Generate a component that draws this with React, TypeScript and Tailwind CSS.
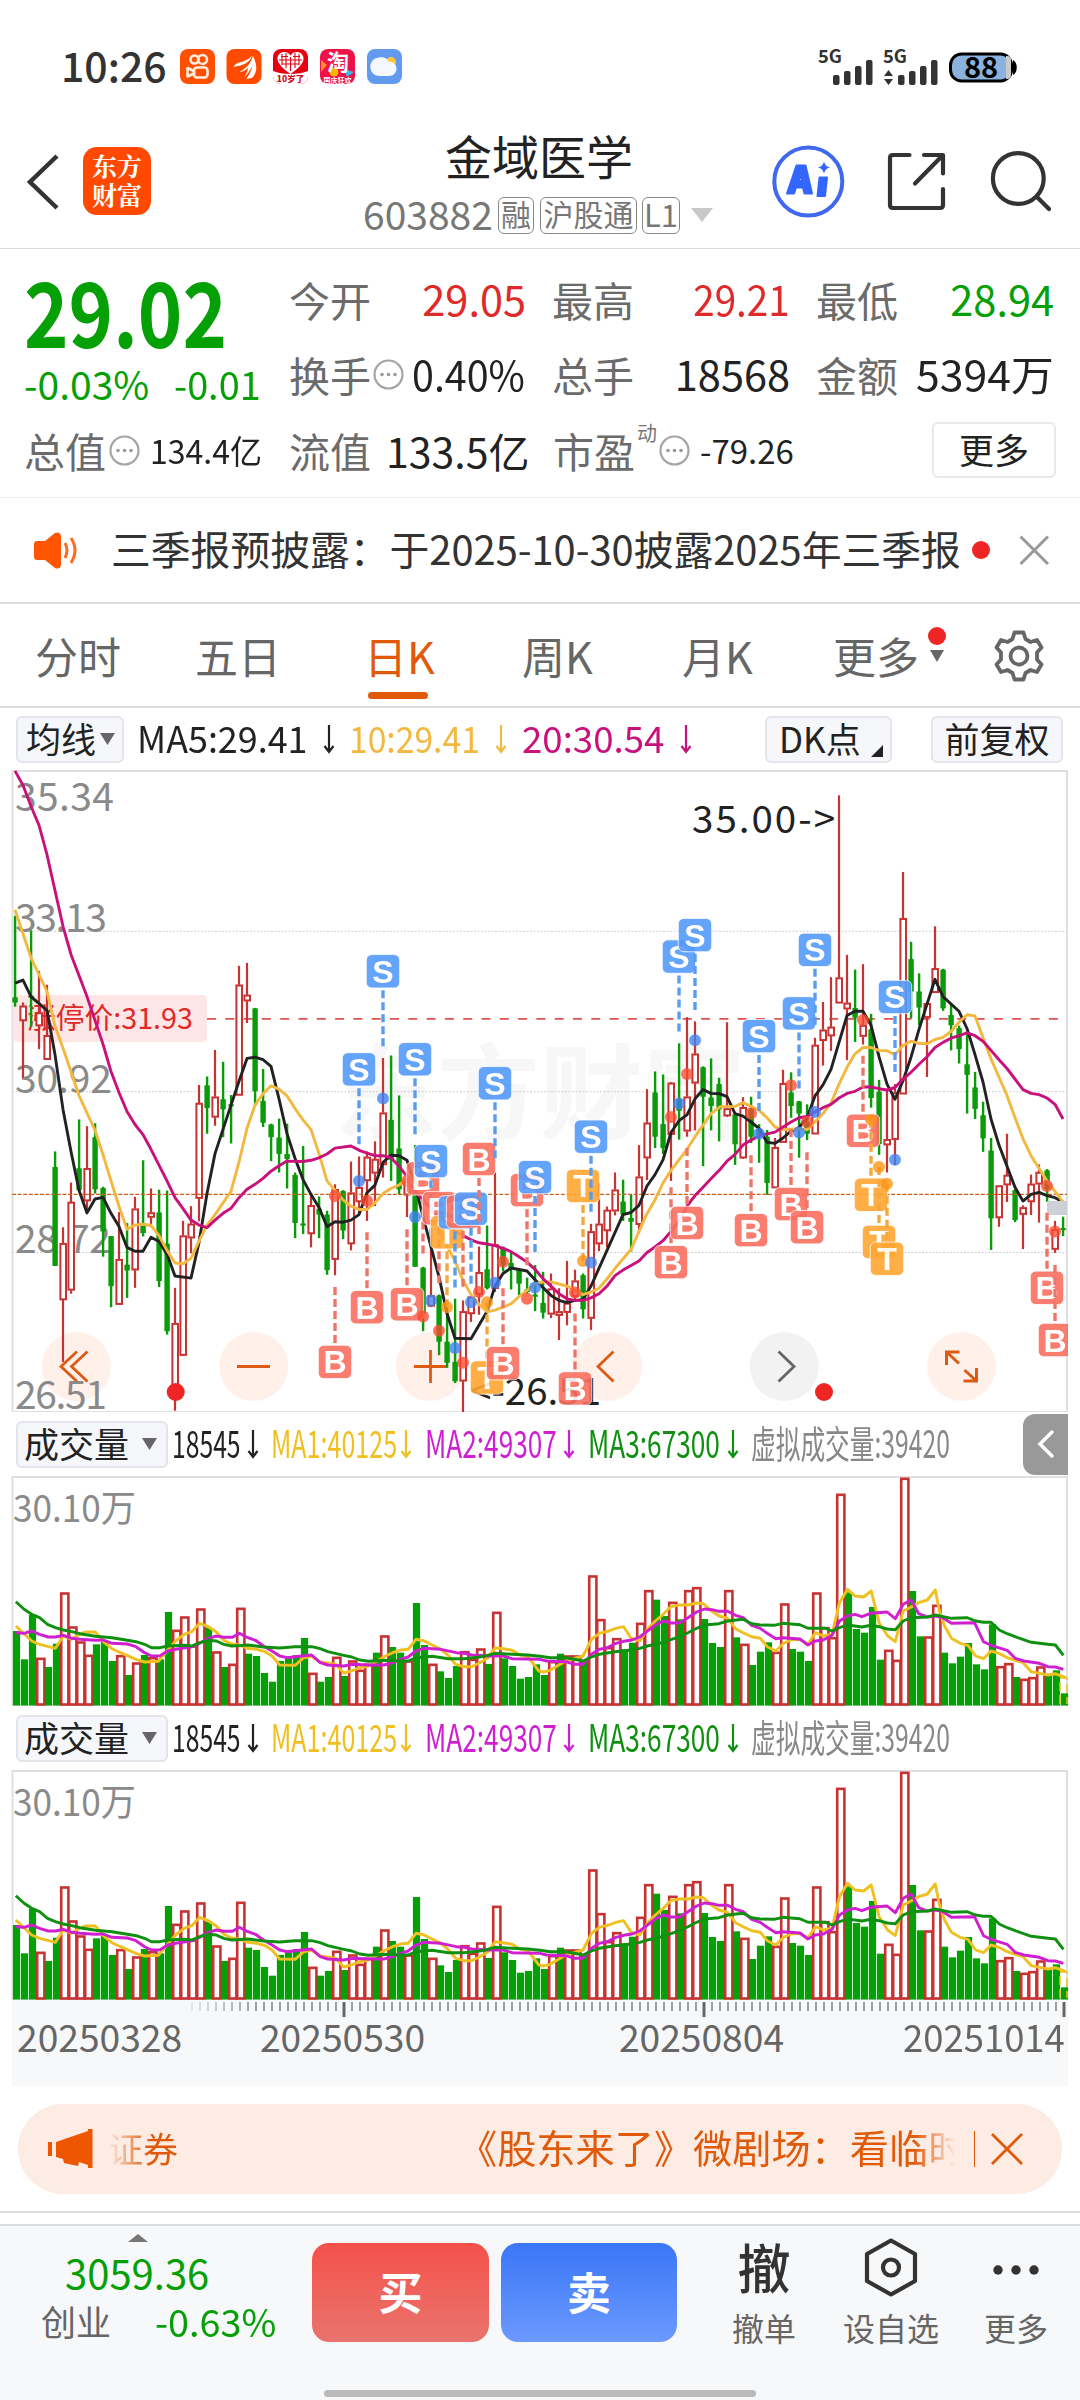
import React from "react";

type Pt = [number, number];

const RED = "#c73333";
const GREEN = "#0a9b0a";
const FONT = "'Noto Sans CJK SC', 'Noto Sans', sans-serif";

/* ---------- price chart data: colour, high, body top, body bottom, low ---------- */
const CANDLES = `G370,564,576,586 R576,584,620,755 G405,560,562,634 R501,600,632,687 R534,654,712,713 G930,967,1202,1202
R1110,1148,1283,1430 R1004,1050,1260,1268 G854,970,1022,1024 R870,970,1048,1076 G863,896,1020,1030 G1014,1017,1120,1180
G1131,1131,1250,1300 R1074,1186,1294,1294 G1100,1199,1213,1278 R1038,1066,1212,1254 G951,1100,1124,1132 R1018,1075,1087,1102
G1021,1075,1238,1252 G1023,1149,1357,1365 R1254,1338,1500,1546 R1095,1130,1415,1415 R1060,1102,1136,1172 R772,815,1042,1096
G752,773,827,888 R689,800,849,869 G717,806,830,896 G796,818,823,911 R489,534,797,797 R482,558,573,625 G589,590,787,822
G734,810,862,872 G864,866,896,953 G852,897,936,980 G864,936,948,1018 G980,986,1100,1136 G917,1101,1106,1126 R1032,1058,1126,1158
G1037,1066,1080,1136 G1071,1080,1212,1223 R1008,1020,1187,1224 G1022,1024,1118,1138 R954,1028,1150,1165 R942,1015,1050,1080
R930,943,1000,1095 R906,948,982,1060 R708,838,962,992 G702,855,950,1000 G797,923,1020,1032 R1000,1000,1034,1086
G915,1000,1204,1204 G1204,1206,1315,1357 R1130,1272,1298,1300 G1270,1272,1382,1414 G1300,1382,1432,1444 G1280,1430,1476,1480
R1284,1310,1476,1550 R1274,1275,1316,1335 R1156,1217,1270,1318 G1106,1210,1255,1258 R980,1151,1256,1264 G1156,1158,1200,1215
G1168,1195,1207,1258 G1209,1212,1244,1272 G1230,1258,1264,1268 G1200,1270,1275,1309 G1216,1290,1313,1327 R1220,1256,1317,1326
R1255,1310,1320,1378 R1190,1290,1313,1343 R1211,1237,1275,1282 G1220,1224,1305,1327 R1102,1120,1327,1354 R1005,1102,1150,1167
R1061,1069,1119,1158 R980,1021,1072,1082 G997,1049,1080,1095 G1033,1088,1097,1168 R915,990,1104,1125 R782,862,946,998
G740,790,895,922 G747,865,922,936 R765,767,890,1000 G673,806,833,902 R611,800,882,895 R621,698,768,880 G728,730,800,965
G709,802,822,880 G755,770,830,906 R623,828,846,848 G840,842,913,962 R801,825,946,948 G800,830,895,910 G865,878,890,957
G879,895,1005,1033 R898,920,1017,1017 R736,768,909,909 G742,790,822,850 G810,811,840,945 G818,860,888,903 R660,677,889,889
R575,641,667,726 R516,634,656,691 R84,517,578,578 R463,577,592,713 G498,589,612,670 R485,630,657,676 G603,640,803,826
G760,788,912,938 R783,901,915,980 R770,790,902,962 R266,376,794,794 G432,473,550,614 G507,550,588,630 R578,578,612,753
R395,495,553,553 G496,498,590,596 G580,606,630,690 G631,637,687,721 G650,723,748,840 G741,778,829,853 G812,844,899,931
G898,928,1089,1164 R1011,1011,1088,1109 R888,986,1010,1050 G1020,1022,1093,1098 R1058,1063,1080,1162 R985,1007,1050,1081
R961,979,1008,1099 G972,975,1020,1050 R1095,1115,1163,1171 G1085,1112,1117,1131`
  .split(/\s+/)
  .map((s) => ({ up: s[0] === "R", v: s.slice(1).split(",").map(Number) }));

const pts = (s: string): Pt[] => s.trim().split(/\s+/).map((p) => p.split(",").map(Number) as Pt);

const MA5 = pts(`45,530 69,523 93,562 141,595 165,700 189,830 213,930 237,1022 261,1076 285,1043 309,1039 333,1077 357,1108 381,1158 405,1167 429,1167 453,1134 477,1144 501,1174 525,1226 573,1231 597,1146 621,1030 645,935 693,820 717,763 741,709 765,706 789,712 813,728 837,805 861,888 885,946 909,997 933,1032 957,1063 981,1109 1005,1097 1029,1098 1053,1093 1077,1080 1101,1028 1125,1010 1149,956 1173,939 1197,940 1221,951 1245,1010 1269,1085 1317,1228 1341,1315 1365,1374 1413,1375 1461,1310 1485,1250 1509,1220 1533,1207 1581,1214 1605,1235 1653,1272 1677,1284 1701,1289 1725,1284 1749,1282 1773,1250 1821,1165 1869,1080 1893,1075 1917,1058 1941,1012 1965,985 1989,950 2013,885 2037,857 2061,843 2085,805 2109,783 2133,792 2160,793 2181,800 2205,840 2229,846 2253,860 2277,875 2301,908 2325,911 2349,898 2373,882 2397,873 2421,850 2445,798 2469,772 2493,735 2541,607 2565,597 2589,597 2613,630 2637,705 2661,770 2685,806 2709,762 2733,706 2757,640 2781,580 2805,521 2829,562 2877,597 2901,638 2925,700 2949,765 2973,853 2997,915 3021,965 3045,1015 3069,1048 3093,1032 3117,1027 3141,1035 3165,1040 3189,1050`);
const MA10 = pts(`45,356 93,470 141,550 165,632 189,685 213,740 237,797 285,880 309,938 333,1000 357,1060 381,1115 405,1105 429,1103 453,1106 477,1130 501,1165 525,1195 549,1197 573,1184 597,1143 621,1105 645,1080 693,1025 717,955 741,875 765,820 789,793 813,774 837,782 861,798 885,828 909,855 933,878 957,935 981,1000 1029,1045 1053,1060 1077,1068 1101,1068 1125,1052 1149,1030 1173,1018 1197,1010 1221,993 1245,1010 1269,1040 1317,1105 1341,1155 1365,1190 1389,1236 1413,1270 1437,1293 1461,1311 1485,1307 1509,1300 1533,1292 1557,1275 1581,1260 1605,1245 1629,1240 1653,1240 1677,1245 1701,1250 1725,1260 1749,1270 1773,1264 1797,1255 1821,1233 1845,1208 1869,1185 1893,1163 1917,1120 1941,1078 1965,1045 1989,1005 2013,975 2061,925 2085,895 2109,868 2133,840 2160,824 2205,823 2229,814 2253,823 2277,832 2301,850 2325,872 2349,878 2397,876 2421,878 2445,860 2469,840 2493,815 2517,770 2541,730 2565,698 2589,683 2613,683 2637,690 2661,691 2685,700 2709,678 2733,668 2757,673 2781,674 2805,664 2829,659 2853,645 2877,623 2901,605 2925,608 2949,660 2973,710 3021,797 3045,850 3069,900 3093,940 3117,970 3141,1000 3165,1025 3189,1050`);
const MA20 = pts(`45,26 69,60 93,110 117,155 141,225 165,310 189,395 213,462 261,562 309,675 333,740 357,790 381,835 405,866 429,890 453,925 501,1000 525,1040 549,1066 573,1093 597,1105 621,1111 645,1093 669,1077 693,1065 717,1040 741,1020 765,1008 789,994 813,977 837,964 861,953 909,954 933,951 957,945 981,936 1005,922 1053,917 1080,928 1101,934 1125,940 1149,940 1173,945 1197,965 1221,990 1245,1025 1269,1045 1293,1065 1317,1090 1365,1120 1389,1130 1413,1140 1437,1147 1461,1150 1485,1154 1509,1160 1533,1168 1557,1180 1581,1193 1605,1210 1629,1232 1653,1250 1677,1268 1701,1280 1725,1284 1749,1284 1773,1278 1797,1268 1821,1250 1845,1225 1869,1212 1917,1190 1941,1170 1965,1157 1989,1142 2013,1120 2037,1095 2061,1060 2085,1035 2109,1015 2133,995 2160,973 2181,953 2205,937 2229,915 2253,903 2277,893 2301,888 2325,884 2349,872 2373,860 2397,850 2421,847 2445,836 2469,826 2493,818 2517,803 2541,792 2565,787 2589,777 2613,777 2637,781 2661,784 2685,778 2709,758 2733,742 2757,723 2781,705 2805,683 2829,671 2853,661 2877,655 2901,648 2925,655 2949,668 2973,690 2997,712 3021,733 3069,783 3093,792 3117,795 3141,803 3165,818 3189,853`);

/* trade marks: kind, x, label centre, dot centre */
const MARKS = `B1005,1430,1036 S1077,735,1000 B1101,1300,1047 S1149,502,804 B1221,1293,1000 S1245,711,1086 B1269,994,1322 S1293,953,1284 B1317,1065,1356 T1341,1122,1300 S1365,1075,1397 B1389,1073,1432 S1413,1066,1288 B1437,948,1264 T1461,1467,1288 S1485,768,1242 B1509,1433,1192 B1581,1022,1280 S1605,991,1253 B1725,1493,1265 T1749,1012,1190 S1773,895,1194 B2013,1193,848 S2037,467,816 B2061,1100,746 S2085,416,666 B2253,1117,840 S2277,656,888 B2373,1055,773 S2397,602,885 B2421,1110,860 S2445,451,836 B2589,881,618 T2613,1033,855 T2637,1145,967 T2661,1185,1007 S2685,563,950 B3141,1254,1012 B3165,1378,1120`
  .split(" ")
  .map((s) => ({ k: s[0] as "S" | "B" | "T", v: s.slice(1).split(",").map(Number) }));

const MARK_COLOR = { S: "#559bfb", B: "#fa7060", T: "#ffa733" };
const STEM_COLOR = { S: "#5a9cf0", B: "#ef7568", T: "#f5a83c" };
const DOT_COLOR = { S: "#3d82f5", B: "#fb4a30", T: "#ff9412" };

const UNIT = 2.3758;
const py = (v: number) => v / UNIT - 10;
const line = (p: Pt[]) => p.map(([x, v]) => `${(x / 3).toFixed(1)},${py(v).toFixed(1)}`).join(" ");

function PriceChart() {
  return (
    <svg className="block h-[642px] w-[1080px]" viewBox="0 0 1080 642" style={{ fontFamily: FONT }}>
      <rect x="12.5" y="1" width="1054.5" height="641" fill="#fff" stroke="#e0e0e2" strokeWidth="2" />
      <text x="334" y="361" fontSize="103" fontWeight="700" fill="#f7f7f7">东方财富</text>
      {[407, 788, 1170].map((v) => (
        <line key={v} x1="12" x2="1067" y1={py(v)} y2={py(v)} stroke="#cfcfcf" strokeWidth="1" strokeDasharray="2 1.5" />
      ))}
      {[76.3, 253.7, 430.3, 607.5, 784.3, 961.5].map((x, i) => (
        <circle key={x} cx={x} cy="596.5" r="34.5" fill={i === 4 ? "#f2f2f2" : "#fff1ea"} />
      ))}
      <g fill="none" stroke="#dc5a14" strokeWidth="2.8">
        <path d="M77 581.500 61 596.500 77 611.500M87.500 581.500 71.500 596.500 87.500 611.500" />
        <path d="M237 596.500h33" />
        <path d="M414 596.500h33M430.500 580v33" />
        <path d="M613.500 581.500 598 596.500 613.500 611.500" />
        <path d="M778.500 581.500 794 596.500 778.500 611.500" stroke="#666" />
        <path strokeWidth="3" d="M946.500 595v-13h13M947 582.500l12 11M963.500 611h13v-13M964.500 600l12 11" />
      </g>
      <rect x="13" y="225" width="194" height="47" rx="5" fill="#ffe6e6" />
      <text x="27" y="259" fontSize="29" fill="#e02a2a" textLength="166" lengthAdjust="spacingAndGlyphs">涨停价:31.93</text>
      <line x1="207" x2="1067" y1={py(615)} y2={py(615)} stroke="#e05252" strokeWidth="1.6" strokeDasharray="9 9.3" />
      <g fontSize="39" fill="#8a8a8a">
        <text x="15" y="41" textLength="99">35.34</text>
        <text x="15" y="162" textLength="92">33.13</text>
        <text x="15" y="323" textLength="97">30.92</text>
        <text x="15" y="483" textLength="96">28.72</text>
        <text x="15" y="639" textLength="92">26.51</text>
      </g>
      {CANDLES.map(({ up, v }, i) => {
        const x = 15 + i * 8;
        const [h, t, b, l] = v.map(py);
        return up ? (
          <g key={i} stroke={RED} strokeWidth="2.2">
            <line x1={x} x2={x} y1={h} y2={t} />
            <line x1={x} x2={x} y1={b} y2={l} />
            <rect x={x - 2.6} y={t + 0.7} width="5.6" height={Math.max(b - t - 1.4, 2)} fill="#fff" strokeWidth="2" />
          </g>
        ) : (
          <g key={i} fill={GREEN}>
            <rect x={x - 1.1} y={h} width="2.4" height={l - h} />
            <rect x={x - 2.6} y={t} width="5.4" height={Math.max(b - t, 2)} />
          </g>
        );
      })}
      <line x1="12" x2="1067" y1={py(1032)} y2={py(1032)} stroke="#c9601c" strokeWidth="1.4" strokeDasharray="4 1.6" />
      <g fill="none" strokeWidth="2.9" strokeLinejoin="round">
        <polyline points={line(MA5)} stroke="#222" />
        <polyline points={line(MA10)} stroke="#f3b83f" />
        <polyline points={line(MA20)} stroke="#c9117c" />
      </g>
      <rect x="1047" y="431" width="20" height="14" fill="#cdd1d7" />
      <g fontSize="38.5" fill="#222">
        <text x="692" y="63" textLength="143">35.00-&gt;</text>
        <text x="470" y="635" textLength="131">&lt;-26.51</text>
      </g>
      {MARKS.map(({ k, v }, i) => {
        const x = v[0] / 3;
        const y = py(v[1]);
        const dot = py(v[2]);
        const down = v[2] > v[1];
        const y1 = down ? y + 19 : y - 19;
        const y2 = down ? y + 75 : y - 75;
        return (
          <g key={i}>
            <line x1={x} x2={x} y1={down ? y1 : y2} y2={down ? y2 : y1} stroke={STEM_COLOR[k]} strokeWidth="3.4" strokeDasharray="8 4" />
            <circle cx={x} cy={dot} r="6" fill={DOT_COLOR[k]} opacity="0.78" />
            <g opacity="0.9">
              <rect x={x - 16.7} y={y - 16.7} width="33.4" height="33.4" rx="5.5" fill={MARK_COLOR[k]} stroke="#fff" strokeOpacity="0.8" strokeWidth="1" />
              <text x={x} y={y + 11.5} fontSize="32" fontWeight="700" fill="#fff" textAnchor="middle" style={{ fontFamily: "'Liberation Sans', sans-serif" }}>{k}</text>
            </g>
          </g>
        );
      })}
      <rect x="1068" y="400" width="12" height="242" fill="#fff" />
      <circle cx="175.700" cy="622" r="9" fill="#ef2424" />
      <circle cx="824" cy="622" r="9" fill="#ef2424" />
    </svg>
  );
}

/* ---------- volume data ---------- */
const VOLUMES = `G690 G775 G642 R772 G798 G728 R576 R678 R723 R763 G730 G722 G780 R764 G822 R786 G762 R770 G775 G633 R688 R648 R735 R624 G680 R753 G798 R790 R622 G758 G765 G816 G842 G780 G772 G762 G711 R817 G842 G828 R769 G825 R780 R808 R790 G755 R705 G738 G755 R780 G606 G732 R790 G811 G831 G795 R752 R775 R744 G789 R634 G772 G795 G833 G828 G790 G822 R782 G758 R765 R765 G780 R525 R656 R740 R713 G745 G725 R667 R569 G596 G645 R604 G655 R569 R560 G654 G726 G738 R569 G709 R730 G792 G752 G724 R754 R609 G744 G752 G780 R576 R680 R710 R280 G574 G684 G695 G618 G776 R748 R778 R232 G570 G706 R708 R613 G755 G787 G767 G726 G790 G805 G670 R797 R788 G828 R835 R830 R798 G822 G808 G877`.split(" ");

const VMA1 = pts(`46,675 92,720 115,730 161,742 184,705 208,715 230,700 250,693 277,693 300,722 325,743 350,755 395,775 420,783 460,781 485,750 510,720 535,700 557,692 580,667 605,677 628,693 650,718 673,729 697,733 720,742 745,745 770,752 790,765 812,792 857,793 882,770 905,766 930,783 975,790 998,816 1020,810 1045,800 1070,795 1095,780 1115,767 1140,755 1163,747 1185,745 1208,715 1230,719 1255,732 1280,745 1300,762 1323,790 1348,797 1370,797 1393,785 1415,772 1438,740 1462,743 1487,748 1510,762 1533,767 1565,810 1578,813 1598,808 1618,795 1643,780 1668,772 1693,765 1718,715 1740,697 1768,690 1788,682 1811,677 1833,712 1858,720 1880,685 1903,660 1926,640 1948,617 1973,612 1998,612 2023,606 2043,608 2066,630 2088,645 2113,652 2136,683 2158,695 2183,707 2208,712 2228,737 2253,750 2276,727 2298,716 2323,715 2346,730 2368,695 2391,705 2416,700 2438,605 2461,565 2483,585 2508,588 2530,570 2553,665 2578,705 2600,722 2623,630 2646,618 2668,605 2693,597 2716,567 2728,630 2743,675 2763,712 2788,727 2811,733 2833,765 2856,773 2878,750 2903,758 2925,770 2948,778 2971,785 2995,812 3018,817 3043,822 3065,818 3095,830`);
const VMA2 = pts(`46,695 70,697 92,690 115,700 140,708 161,708 184,703 208,712 232,715 277,718 300,717 325,727 370,729 395,737 420,755 440,765 465,764 487,750 510,745 557,737 580,727 605,712 628,705 650,709 675,709 695,697 720,710 742,718 765,735 790,750 812,765 835,770 857,767 905,762 930,785 952,792 998,795 1022,790 1070,792 1115,792 1140,785 1163,775 1185,768 1208,750 1230,742 1280,745 1325,755 1348,757 1370,762 1415,765 1462,765 1487,773 1568,775 1588,780 1643,782 1668,790 1693,790 1718,760 1740,745 1763,740 1786,728 1811,721 1835,717 1858,708 1880,690 1903,672 1926,660 1948,666 1973,666 1998,650 2023,633 2046,624 2068,626 2088,631 2113,631 2136,643 2158,650 2183,673 2208,682 2228,697 2253,713 2273,710 2323,714 2346,732 2368,720 2391,717 2416,703 2438,660 2461,645 2483,640 2503,647 2528,637 2576,633 2600,653 2623,610 2646,597 2668,638 2693,648 2716,645 2738,650 2763,667 2830,665 2856,722 2878,733 2925,748 2948,772 2973,780 3018,787 3043,797 3065,798 3088,805`);
const VMA3 = pts(`46,602 70,625 92,640 115,650 138,670 161,680 184,687 208,692 232,698 277,706 325,710 370,718 395,722 420,730 440,740 465,740 487,735 535,733 557,735 580,725 605,718 628,720 650,730 673,735 720,732 765,738 812,741 857,737 905,737 930,743 952,752 998,763 1022,768 1045,777 1070,781 1115,778 1163,780 1185,780 1208,770 1255,766 1302,773 1348,773 1393,768 1415,763 1438,757 1487,760 1533,762 1568,766 1598,770 1643,770 1668,775 1693,780 1718,768 1740,760 1786,752 1833,747 1858,742 1880,735 1926,724 1973,707 1998,695 2023,682 2046,672 2088,668 2113,660 2158,655 2183,668 2208,672 2248,673 2273,667 2323,671 2346,682 2398,682 2416,690 2438,680 2461,672 2503,678 2530,673 2553,677 2576,684 2600,686 2623,660 2646,650 2693,648 2716,642 2763,652 2808,650 2833,660 2856,664 2878,664 2903,688 2925,698 2948,707 2995,724 3043,730 3065,732 3088,763`);
const vy = (v: number) => (v - 228) / 3 + 1;
const vline = (p: Pt[]) => p.map(([x, v]) => `${(x / 2.904).toFixed(1)},${vy(v).toFixed(1)}`).join(" ");

function VolumeChart() {
  return (
    <svg className="block h-[230px] w-[1080px]" viewBox="0 0 1080 230" style={{ fontFamily: FONT }}>
      <rect x="12.5" y="1" width="1054.500" height="228" fill="#fff" stroke="#e0e0e2" strokeWidth="2" />
      <text x="13" y="46" fontSize="37" fill="#8a8a8a" textLength="123" lengthAdjust="spacingAndGlyphs">30.10万</text>
      {VOLUMES.map((s, i) => {
        const x = 12.9 + i * 8;
        const y = vy(Number(s.slice(1)));
        return s[0] === "R" ? (
          <rect key={i} x={x + 0.3} y={y + 0.5} width="7.200" height={228 - y} fill="#fff" stroke={RED} strokeWidth="2.600" />
        ) : (
          <rect key={i} x={x} y={y} width="7.200" height={229.5 - y} fill="#05a005" />
        );
      })}
      <path d="M1060 228V202h7v26" fill="none" stroke="#f0c020" strokeWidth="1.500" strokeDasharray="9 4" />
      <g fill="none" strokeWidth="2.900" strokeLinejoin="round">
        <polyline points={vline(VMA1)} stroke="#f0c020" />
        <polyline points={vline(VMA2)} stroke="#d01fd0" />
        <polyline points={vline(VMA3)} stroke="#109010" />
      </g>
    </svg>
  );
}

function Arrow({ cls = "" }: { cls?: string }) {
  return (
    <svg className={"shrink-0 " + cls} width="12" height="30" viewBox="0 0 12 30" fill="none" stroke="currentColor" strokeWidth="2.200">
      <path d="M6 1v27M1.500 22 6 28l4.500-6" />
    </svg>
  );
}

function Tri({ cls = "", w = 15, h = 12 }: { cls?: string; w?: number; h?: number }) {
  return (
    <svg className={"shrink-0 " + cls} width={w} height={h} viewBox="0 0 10 10" preserveAspectRatio="none" fill="currentColor">
      <path d="M0 0h10L5 10z" />
    </svg>
  );
}

function Info({ cls = "" }: { cls?: string }) {
  return (
    <svg className={"shrink-0 " + cls} width="31" height="31" viewBox="0 0 31 31" fill="none" stroke="#a5a5a5" strokeWidth="2.200">
      <circle cx="15.500" cy="15.500" r="14" />
      <g fill="#999" stroke="none"><circle cx="9" cy="15.500" r="1.800" /><circle cx="15.500" cy="15.500" r="1.800" /><circle cx="22" cy="15.500" r="1.800" /></g>
    </svg>
  );
}

function VolumeHeader({ toggle }: { toggle?: boolean }) {
  return (
    <div className="flex h-[64px] items-center pl-4 text-[38px] leading-none whitespace-nowrap">
      <div className="flex h-[47px] w-[152px] shrink-0 items-center rounded-md border-2 border-[#e3e5ea] bg-[#f6f7fa] pl-[6px] text-[35px] text-[#222]">
        <span className="-mt-1">成交量</span>
        <Tri cls="ml-[13px] text-[#666]" w={15} h={12} />
      </div>
      <span className="-mt-1 ml-[4px] w-[69px] shrink-0 origin-left scale-x-[0.650] text-[#222]">18545</span>
      <Arrow cls="ml-[6px] text-[#222]" />
      <span className="-mt-1 ml-[12px] w-[123px] shrink-0 origin-left scale-x-[0.660] text-[#f0bf20]">MA1:40125</span>
      <Arrow cls="ml-[6px] text-[#f0bf20]" />
      <span className="-mt-1 ml-[13px] w-[130px] shrink-0 origin-left scale-x-[0.690] text-[#d01fd0]">MA2:49307</span>
      <Arrow cls="ml-[8px] text-[#d01fd0]" />
      <span className="-mt-1 ml-[13px] w-[131px] shrink-0 origin-left scale-x-[0.690] text-[#109010]">MA3:67300</span>
      <Arrow cls="ml-[8px] text-[#109010]" />
      <span className="-mt-1 ml-[12px] w-[200px] shrink-0 origin-left scale-x-[0.650] text-[#888]">虚拟成交量:39420</span>
      {toggle && (
        <div className="mr-[12px] ml-auto flex h-[61px] w-[45px] shrink-0 items-center justify-center rounded-l-xl bg-[#999]">
          <svg width="18" height="30" viewBox="0 0 18 30" fill="none" stroke="#fff" strokeWidth="3.500" strokeLinecap="round"><path d="M15 3 3 15l12 12" /></svg>
        </div>
      )}
    </div>
  );
}

function StatusBar() {
  return (
    <div className="flex h-[112px] items-center pt-[21px] pl-[61px]">
      <span className="-mt-[5px] w-[103px] text-[41px] leading-none font-medium text-[#333]">10:26</span>
      <svg className="ml-[16px] overflow-visible" width="222" height="35" viewBox="0 0 222 35">
        <rect width="35" height="35" rx="8" fill="#ff5000" />
        <g fill="none" stroke="#ffeedd" strokeWidth="2.600"><circle cx="14.500" cy="10.500" r="4" /><circle cx="22.500" cy="10.500" r="4.500" /><rect x="14" y="18.500" width="13.500" height="10" rx="3" /><path d="M14 22 7.500 19v8.500l6.500-3z" strokeLinejoin="round" /></g>
        <rect x="46.500" width="35" height="35" rx="8" fill="#ff4a00" />
        <path d="M53.500 18c2-6 10-3 18.500-11-3 7-8 9-18.500 11zM59.500 23c7-4 11-8 13.500-16 1 9-2 14-8.500 21 1-3 3-5 3.500-9-3 2-5 4-8.500 4zM66 30c5-6 7-12 7-23 5 10 4 17-1 22z" fill="#fff" />
        <rect x="93" width="35" height="35" rx="8" fill="#e60012" />
        <path d="M93 22c9 4 26 4 35 0v5a8 8 0 0 1-8 8h-19a8 8 0 0 1-8-8z" fill="#fff" />
        <path d="M110.500 25C102 19 97.500 14 97.500 9.500c0-7 9.500-9 13-3 3.500-6 13-4 13 3 0 4.500-4.500 9.500-13 15.500z" fill="#fff" />
        <path d="M102 5v11M106 4v15M110.500 8v14M115 4v15M119 5v11M99 11h23M101 7.500h7M113 7.500h7M102 15h17" stroke="#e60012" strokeWidth="1.100" fill="none" />
        <text x="110.500" y="33" fontSize="8.500" fontWeight="900" fill="#c8101a" textAnchor="middle" fontFamily={FONT}>10岁了</text>
        <rect x="140" width="35" height="35" rx="8" fill="#ee1248" />
        <circle cx="154" cy="23" r="4.500" fill="#ffb300" /><path d="M164 20l10 3-7 5z" fill="#35b8f0" /><path d="M141 11l6 5-6 7z" fill="#ff8b2a" />
        <text x="158" y="20.500" fontSize="22" fontWeight="700" fill="#fff" textAnchor="middle" fontFamily={FONT}>淘</text>
        <text x="157.500" y="33.500" fontSize="7" fontWeight="700" fill="#fff" textAnchor="middle" fontFamily={FONT}>国庆狂欢</text>
        <rect x="187" width="35" height="35" rx="8" fill="#629af0" />
        <circle cx="211" cy="13" r="5" fill="#ffc83a" />
        <path d="M200 27a9 9 0 0 1-1-18.500c4-1 8 0 9.500 4 6 0 8 4 8 7 0 4-3 7.500-7.500 7.500z" fill="#f5f9ff" />
      </svg>
      <svg className="mr-[60px] ml-auto overflow-visible" width="202" height="38" viewBox="0 0 202 38" fontFamily={FONT}>
        <g fill="#333">
          <text x="0" y="15" fontSize="18" fontWeight="700" textLength="24" lengthAdjust="spacingAndGlyphs">5G</text>
          <text x="65" y="15" fontSize="18" fontWeight="700" textLength="24" lengthAdjust="spacingAndGlyphs">5G</text>
          {[15, 26, 37, 48, 80, 91, 102, 113].map((x, i) => {
            const h = [10, 14, 19, 25][i % 4];
            return <rect key={x} x={x} y={37 - h} width="6.500" height={h} rx="2" />;
          })}
          <path d="M66 28h9l-4.500-6zM66 31h9l-4.500 6z" />
        </g>
        <rect x="132.500" y="6" width="61" height="27" rx="11" fill="#8bb2dd" stroke="#000" strokeWidth="3" />
        <path d="M188 8h1a4 4 0 0 1 4 4v15a4 4 0 0 1-4 4h-1z" fill="#c9c9c9" />
        <path d="M195 12c5 2 5 13 0 15z" fill="#000" />
        <text x="163" y="30" fontSize="29" fontWeight="700" textAnchor="middle" fill="#000">88</text>
      </svg>
    </div>
  );
}

function Header() {
  return (
    <div className="flex h-[137px] items-start border-b border-[#dcdcdc]">
      <svg className="mt-[41px] ml-[25px] shrink-0" width="36" height="58" viewBox="0 0 36 58" fill="none" stroke="#333" strokeWidth="4.500"><path d="M32 3 5 29l27 26" /></svg>
      <div className="mt-[35px] ml-[22px] flex h-[68px] w-[68px] shrink-0 flex-col items-center rounded-[14px] bg-[#ff4800] pt-[4px] font-['Noto_Serif_CJK_SC','Noto_Sans_CJK_SC',sans-serif] text-[25px] leading-[29px] font-bold text-white">
        <span>东方</span>
        <span>财富</span>
      </div>
      <div className="ml-[209px] flex w-[360px] shrink-0 flex-col whitespace-nowrap">
        <span className="mt-[17px] ml-[85px] text-[47px] leading-[52px] text-[#222]">金域医学</span>
        <div className="mt-[15px] ml-[3px] flex h-[38px] items-center leading-none text-[#777]">
          <span className="-mt-1 w-[128px] text-[39px]">603882</span>
          <span className="ml-[7px] flex h-[37px] w-[36px] items-center justify-center rounded-md border-[1.500px] border-[#888] pb-1 text-[30px]">融</span>
          <span className="ml-[6px] flex h-[37px] w-[97px] items-center justify-center rounded-md border-[1.500px] border-[#888] pb-1 text-[30px]">沪股通</span>
          <span className="ml-[5px] flex h-[37px] w-[38px] items-center justify-center rounded-md border-[1.500px] border-[#888] pb-1 text-[31px]">L1</span>
          <Tri cls="ml-[11px] text-[#c8c8c8]" w={22} h={14} />
        </div>
      </div>
      <svg className="mt-[32px] ml-[51px] shrink-0" width="74" height="74" viewBox="0 0 74 74">
        <circle cx="37.300" cy="37.500" r="34" fill="none" stroke="#3f68ef" strokeWidth="4" />
        <g fill="#3366ff" stroke="#3366ff" strokeWidth="2" strokeLinejoin="round">
          <path fillRule="evenodd" d="M16 49.500 25.500 21.500h9l6.500 28h-7.500l-1.500-6h-7l-2 6zM27.500 37h3.500l-1-6.500z" />
          <path d="M48.500 33.500h7.500l-2 18.500h-7.500z" />
        </g>
        <path d="M53 17.500c1 3.500 2.500 5 6 6-3.500 1-5 2.500-6 6-1-3.500-2.500-5-6-6 3.500-1 5-2.500 6-6z" fill="#3366ff" />
      </svg>
      <svg className="mt-[40px] ml-[42px] shrink-0" width="60" height="60" viewBox="0 0 60 60" fill="none" stroke="#333" strokeWidth="4.200" strokeLinecap="round" strokeLinejoin="round">
        <path d="M22.500 3H6Q3 3 3 6v47q0 3 3 3h47q3 0 3-3V37M37 3h19v18.500M55 4 28 31.500" />
      </svg>
      <svg className="mt-[38px] ml-[41px] shrink-0" width="64" height="64" viewBox="0 0 64 64" fill="none" stroke="#333" strokeWidth="4.200" strokeLinecap="round">
        <circle cx="30.300" cy="28.500" r="25.400" /><path d="M49 47 61 59" />
      </svg>
    </div>
  );
}

const LBL = "text-[41px] text-[#6b6b6b] shrink-0";

function Quote() {
  return (
    <div className="flex h-[249px] flex-col border-b border-[#ececec] leading-none whitespace-nowrap">
      <div className="flex h-[165px]">
        <div className="flex w-[289px] shrink-0 flex-col text-[#05a005]">
          <span className="mt-[15px] ml-[24px] h-[90px] w-[210px] origin-left scale-x-[0.840] text-[90px] font-bold">29.02</span>
          <div className="mt-[10px] flex pl-[24px] text-[39px]">
            <span className="w-[150px] origin-left">-0.03%</span>
            <span className="origin-left scale-x-[0.970]">-0.01</span>
          </div>
        </div>
        <div className="flex flex-1 flex-col pr-[26px] text-[41.500px]">
          <div className="mt-[27px] flex h-[46px] items-center">
            <span className={LBL}>今开</span>
            <span className="ml-auto text-[#e02a2a]">29.05</span>
            <span className={LBL + " ml-[26px]"}>最高</span>
            <span className="w-[156px] text-right text-[#e02a2a]"><span className="inline-block origin-right scale-x-[0.930]">29.21</span></span>
            <span className={LBL + " ml-[26px]"}>最低</span>
            <span className="w-[156px] text-right text-[#05a005]">28.94</span>
          </div>
          <div className="mt-[29px] flex h-[46px] items-center text-[#222]">
            <span className={LBL}>换手</span>
            <Info cls="ml-[2px]" />
            <span className="ml-auto w-[114px]"><span className="inline-block origin-left scale-x-[0.950]">0.40%</span></span>
            <span className={LBL + " ml-[26px]"}>总手</span>
            <span className="w-[156px] text-right">18568</span>
            <span className={LBL + " ml-[26px]"}>金额</span>
            <span className="flex w-[156px] justify-end"><span className="inline-block origin-right scale-x-[1.030]">5394万</span></span>
          </div>
        </div>
      </div>
      <div className="mt-[13px] flex h-[46px] items-center text-[#222]">
        <span className={LBL + " ml-[24px]"}>总值</span>
        <Info cls="ml-[3px]" />
        <span className="ml-[10px] w-[112px] origin-left text-[33px]"><span className="inline-block origin-left scale-x-[0.970]">134.4亿</span></span>
        <span className={LBL + " ml-[27px]"}>流值</span>
        <span className="ml-[15px] w-[141px] text-[41px]"><span className="inline-block origin-left">133.5亿</span></span>
        <span className={LBL + " ml-[26px]"}>市盈</span>
        <span className="-mt-[34px] ml-[2px] text-[20px] text-[#777]">动</span>
        <Info cls="ml-[2px]" />
        <span className="ml-[10px] text-[33px]">-79.26</span>
        <div className="mr-[24px] ml-auto flex h-[56px] w-[124px] items-center justify-center rounded-md border-2 border-[#e9e9e9] pb-1 text-[35px]">更多</div>
      </div>
    </div>
  );
}

function Notice() {
  return (
    <div className="flex h-[106px] items-center border-b-2 border-[#dcdcdc] leading-none whitespace-nowrap">
      <svg className="ml-[34px] shrink-0" width="46" height="37" viewBox="0 0 46 37">
        <path d="M0 12q0-3 3-3h8L21 1q5-2 6 3v29q-1 5-6 3L11 28H3q-3 0-3-3z" fill="#ff5500" />
        <path d="M31 11q4 7 0 15M37 6q8 12 0 25" fill="none" stroke="#ff6a20" strokeWidth="3" />
      </svg>
      <span className="-mt-1 ml-[31px] w-[851px] text-[39.800px] text-[#333]">三季报预披露：于2025-10-30披露2025年三季报</span>
      <span className="ml-[10px] h-[18px] w-[18px] shrink-0 rounded-full bg-[#ef2424]" />
      <svg className="ml-[29px] shrink-0" width="31" height="31" viewBox="0 0 31 31" stroke="#999" strokeWidth="3"><path d="M1.500 1.500 29 29M29 1.500 1.500 29" /></svg>
    </div>
  );
}

function Tabs() {
  return (
    <div className="flex h-[104px] items-start border-b-2 border-[#dcdcdc] pt-[30px] pl-[35px] text-[43px] leading-none whitespace-nowrap text-[#666]">
      <span className="w-[160px] shrink-0">分时</span>
      <span className="w-[169px] shrink-0">五日</span>
      <span className="flex w-[158px] shrink-0 flex-col text-[#e05a0a]">
        日K
        <span className="mt-[15px] ml-[4px] h-[7px] w-[60px] rounded bg-[#e05a0a]" />
      </span>
      <span className="w-[160px] shrink-0">周K</span>
      <span className="w-[151px] shrink-0">月K</span>
      <span className="shrink-0">更多</span>
      <div className="-mt-[7px] ml-[8px] flex w-[20px] shrink-0 flex-col items-center">
        <span className="h-[18px] w-[18px] rounded-full bg-[#ef2424]" />
        <Tri cls="mt-[5px]" w={14} h={12} />
      </div>
      <svg className="-mt-[4px] ml-[46px] shrink-0" width="52" height="52" viewBox="0 0 52 52" fill="none" stroke="#666" strokeWidth="3.800" strokeLinejoin="round">
        <path d="M21.500 2.500h9l2 6.500 5 3 6.500-2 4.500 7.500-4.500 5v7l4.500 5-4.500 7.500-6.500-2-5 3-2 6.500h-9l-2-6.500-5-3-6.500 2L3.500 34.500l4.500-5v-7l-4.500-5L8 10l6.500 2 5-3z" />
        <circle cx="26" cy="26" r="8.500" />
      </svg>
    </div>
  );
}

function IndicatorRow() {
  const box = "flex h-[47px] shrink-0 items-center rounded-md border-2 border-[#e3e5ea] bg-[#f6f7fa] text-[#222]";
  return (
    <div className="flex h-[62px] items-center pl-4 text-[37px] leading-none whitespace-nowrap">
      <div className={box + " w-[108px] pl-[8px] text-[35px]"}>
        <span className="-mt-1">均线</span>
        <Tri cls="ml-[4px] text-[#666]" w={15} h={12} />
      </div>
      <span className="-mt-1 ml-[13px] w-[171px] shrink-0 origin-left scale-x-[0.970] text-[#222]">MA5:29.41</span>
      <Arrow cls="ml-[15px] text-[#222]" />
      <span className="-mt-1 ml-[14px] w-[131px] shrink-0 origin-left scale-x-[0.910] text-[#f3b83f]">10:29.41</span>
      <Arrow cls="ml-[15px] text-[#f3b83f]" />
      <span className="-mt-1 ml-[15px] w-[145px] shrink-0 origin-left scale-x-[0.990] text-[#c9117c]">20:30.54</span>
      <Arrow cls="ml-[13px] text-[#c9117c]" />
      <div className={box + " ml-[73px] w-[127px] pl-[12px] text-[35px]"}>
        <span className="-mt-1 w-[84px]">DK点</span>
        <svg className="mt-[24px] ml-[8px] shrink-0" width="12" height="12" viewBox="0 0 12 12"><path d="M12 0v12H0z" fill="#222" /></svg>
      </div>
      <div className={box + " ml-[39px] w-[132px] justify-center text-[35px]"}>
        <span className="-mt-1">前复权</span>
      </div>
    </div>
  );
}

function DateAxis() {
  return (
    <div className="mx-[12px] h-[86px] bg-[#f7f8fa] text-[37.200px] leading-none text-[#666]">
      <svg className="block" width="1056" height="18" viewBox="12 0 1056 18">
        {Array.from({ length: 110 }, (_, i) => {
          const x = 192 + i * 8;
          const major = x === 344 || x === 704 || x === 1064;
          return <rect key={x} x={x - (major ? 1.5 : 0.8)} y="2" width={major ? 3 : 1.6} height={major ? 15 : 9} fill={major ? "#666" : "#888"} opacity={Math.min(1, 0.2 + i * 0.1)} />;
        })}
      </svg>
      <div className="flex pl-[5px]">
        <span className="w-[243px]">20250328</span>
        <span className="w-[359px]">20250530</span>
        <span className="w-[284px]">20250804</span>
        <span className="origin-left scale-x-[0.980]">20251014</span>
      </div>
    </div>
  );
}

function Banner() {
  return (
    <div className="mx-[18px] mt-[18px] flex h-[90px] items-center rounded-full bg-[#fdece3] leading-none whitespace-nowrap text-[#e05a0a]">
      <svg className="ml-[30px] shrink-0" width="46" height="40" viewBox="0 0 46 40" fill="#ee5600">
        <path d="M0 13h4v14H0zM8 13 40 2V0h4.500v39H40v-3l-9-3-1 4-14-3-1-4-7-2z" />
      </svg>
      <div className="-mt-1 ml-[14px] flex h-[46px] w-[848px] shrink-0 items-center overflow-hidden [mask-image:linear-gradient(to_right,transparent,black_5%,black_95%,transparent)]">
        <span className="w-[350px] shrink-0 text-[35px]">证券</span>
        <span className="text-[39.200px]">《股东来了》微剧场：看临时</span>
      </div>
      <span className="ml-[18px] h-[36px] w-px shrink-0 bg-[#e05a0a]" />
      <svg className="ml-[15px] shrink-0" width="34" height="34" viewBox="0 0 34 34" stroke="#e05a0a" strokeWidth="2.800"><path d="M2 2 32 32M32 2 2 32" /></svg>
    </div>
  );
}

function BottomBar() {
  return (
    <div className="mt-[11px] flex h-[176px] flex-col border-t-2 border-[#d8dbe0] bg-[#f7f8fa] leading-none whitespace-nowrap">
      <div className="flex h-[164px]">
        <div className="flex w-[312px] shrink-0 flex-col text-[#05a005]">
          <Tri cls="mt-[8px] ml-[128px] rotate-180 text-[#777]" w={20} h={8} />
          <span className="mt-[10px] ml-[65px] text-[40px]">3059.36</span>
          <div className="mt-[9px] flex items-center pl-[41px]">
            <span className="text-[35px] text-[#666]">创业</span>
            <span className="ml-[44px] origin-left scale-x-[0.980] text-[38.500px]">-0.63%</span>
          </div>
        </div>
        <div className="mt-[17px] flex h-[99px] w-[177px] shrink-0 items-center justify-center rounded-[17px] bg-gradient-to-b from-[#f4504a] to-[#e9736d] pb-1 text-[44px] font-bold text-white">买</div>
        <div className="mt-[17px] ml-[12px] flex h-[99px] w-[176px] shrink-0 items-center justify-center rounded-[17px] bg-gradient-to-b from-[#3b76f6] to-[#6b99ff] pb-1 text-[44px] font-bold text-white">卖</div>
        <div className="ml-[45px] flex w-[84px] shrink-0 flex-col items-center text-[32px] text-[#666]">
          <span className="mt-[14px] h-[60px] text-[53px] font-medium text-[#333]">撤</span>
          <span className="mt-[11px]">撤单</span>
        </div>
        <div className="ml-[36px] flex w-[98px] shrink-0 flex-col items-center text-[32px] text-[#666]">
          <svg className="mt-[12px]" width="54" height="59" viewBox="0 0 54 59" fill="none" stroke="#333" strokeWidth="4.200" strokeLinejoin="round"><path d="M27 2.500 51 16v27L27 56.500 3 43V16z" /><circle cx="27" cy="29.500" r="8" /></svg>
          <span className="mt-[14px]">设自选</span>
        </div>
        <div className="ml-[42px] flex w-[68px] shrink-0 flex-col items-center text-[32px] text-[#666]">
          <svg className="mt-[38px]" width="48" height="12" viewBox="0 0 48 12" fill="#333"><circle cx="6" cy="6" r="4.700" /><circle cx="24" cy="6" r="4.700" /><circle cx="42" cy="6" r="4.700" /></svg>
          <span className="mt-[35px]">更多</span>
        </div>
      </div>
      <span className="ml-[324px] h-[7px] w-[432px] rounded-full bg-[#bababa]" />
    </div>
  );
}

export default function App() {
  return (
    <div className="flex h-[2400px] w-[1080px] flex-col overflow-hidden bg-white font-['Noto_Sans_CJK_SC','Noto_Sans',sans-serif] [&>*]:shrink-0">
      <StatusBar />
      <Header />
      <Quote />
      <Notice />
      <Tabs />
      <IndicatorRow />
      <PriceChart />
      <VolumeHeader toggle />
      <VolumeChart />
      <VolumeHeader />
      <VolumeChart />
      <DateAxis />
      <Banner />
      <div className="mt-[17px] border-t-2 border-[#d8dbe0]" />
      <BottomBar />
    </div>
  );
}
